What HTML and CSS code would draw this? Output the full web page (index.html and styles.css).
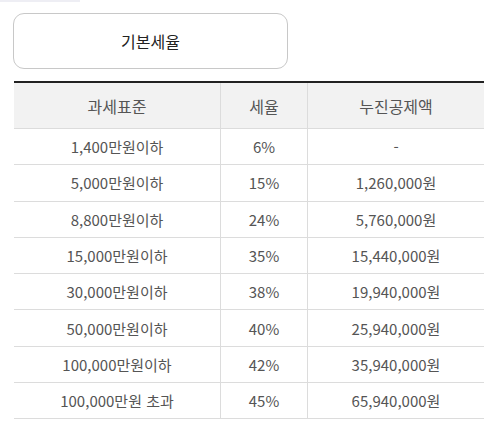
FILE: index.html
```html
<!DOCTYPE html>
<html lang="ko">
<head>
<meta charset="utf-8">
<link rel="stylesheet" href="styles.css">
</head>
<body>
<div class="topbar"></div>
<div class="page">
  <div class="tab">기본세율</div>
  <table class="rates">
    <thead>
      <tr><th class="c1">과세표준</th><th class="c2">세율</th><th class="c3">누진공제액</th></tr>
    </thead>
    <tbody>
      <tr><td>1,400만원이하</td><td>6%</td><td>-</td></tr>
      <tr><td>5,000만원이하</td><td>15%</td><td>1,260,000원</td></tr>
      <tr><td>8,800만원이하</td><td>24%</td><td>5,760,000원</td></tr>
      <tr><td>15,000만원이하</td><td>35%</td><td>15,440,000원</td></tr>
      <tr><td>30,000만원이하</td><td>38%</td><td>19,940,000원</td></tr>
      <tr><td>50,000만원이하</td><td>40%</td><td>25,940,000원</td></tr>
      <tr><td>100,000만원이하</td><td>42%</td><td>35,940,000원</td></tr>
      <tr><td>100,000만원 초과</td><td>45%</td><td>65,940,000원</td></tr>
    </tbody>
  </table>
</div>
</body>
</html>
```
FILE: styles.css
```css
html, body {
  margin: 0;
  padding: 0;
  background: #fff;
  font-family: "Noto Sans CJK KR", "Noto Sans", sans-serif;
  color: #555;
}
.topbar {
  width: 80px;
  height: 2px;
  background: #eeeef4;
}
.page {
  padding: 11px 11px 0 14px;
}
.tab {
  box-sizing: border-box;
  width: 275px;
  height: 56px;
  margin-left: -1px;
  border: 1px solid #c8c8c8;
  border-radius: 11px;
  display: flex;
  align-items: center;
  justify-content: center;
  font-size: 16px;
  color: #222;
  font-weight: normal;
}
.rates {
  margin-top: 12px;
  width: 468px;
  border-collapse: collapse;
  border-top: 2px solid #222;
  table-layout: fixed;
}
.rates th, .rates td {
  padding: 0;
  text-align: center;
  border-bottom: 1px solid #dcdcdc;
  border-left: 1px solid #dcdcdc;
  font-weight: normal;
}
.rates th:first-child, .rates td:first-child {
  border-left: none;
}
.rates th {
  height: 45px;
  background: #f2f2f2;
  font-size: 16px;
  color: #555;
}
.rates td {
  height: 35.3px;
  font-size: 15px;
  color: #555;
}
.c1 { width: 206px; }
.c2 { width: 86px; }
.c3 { width: 176px; }
```
